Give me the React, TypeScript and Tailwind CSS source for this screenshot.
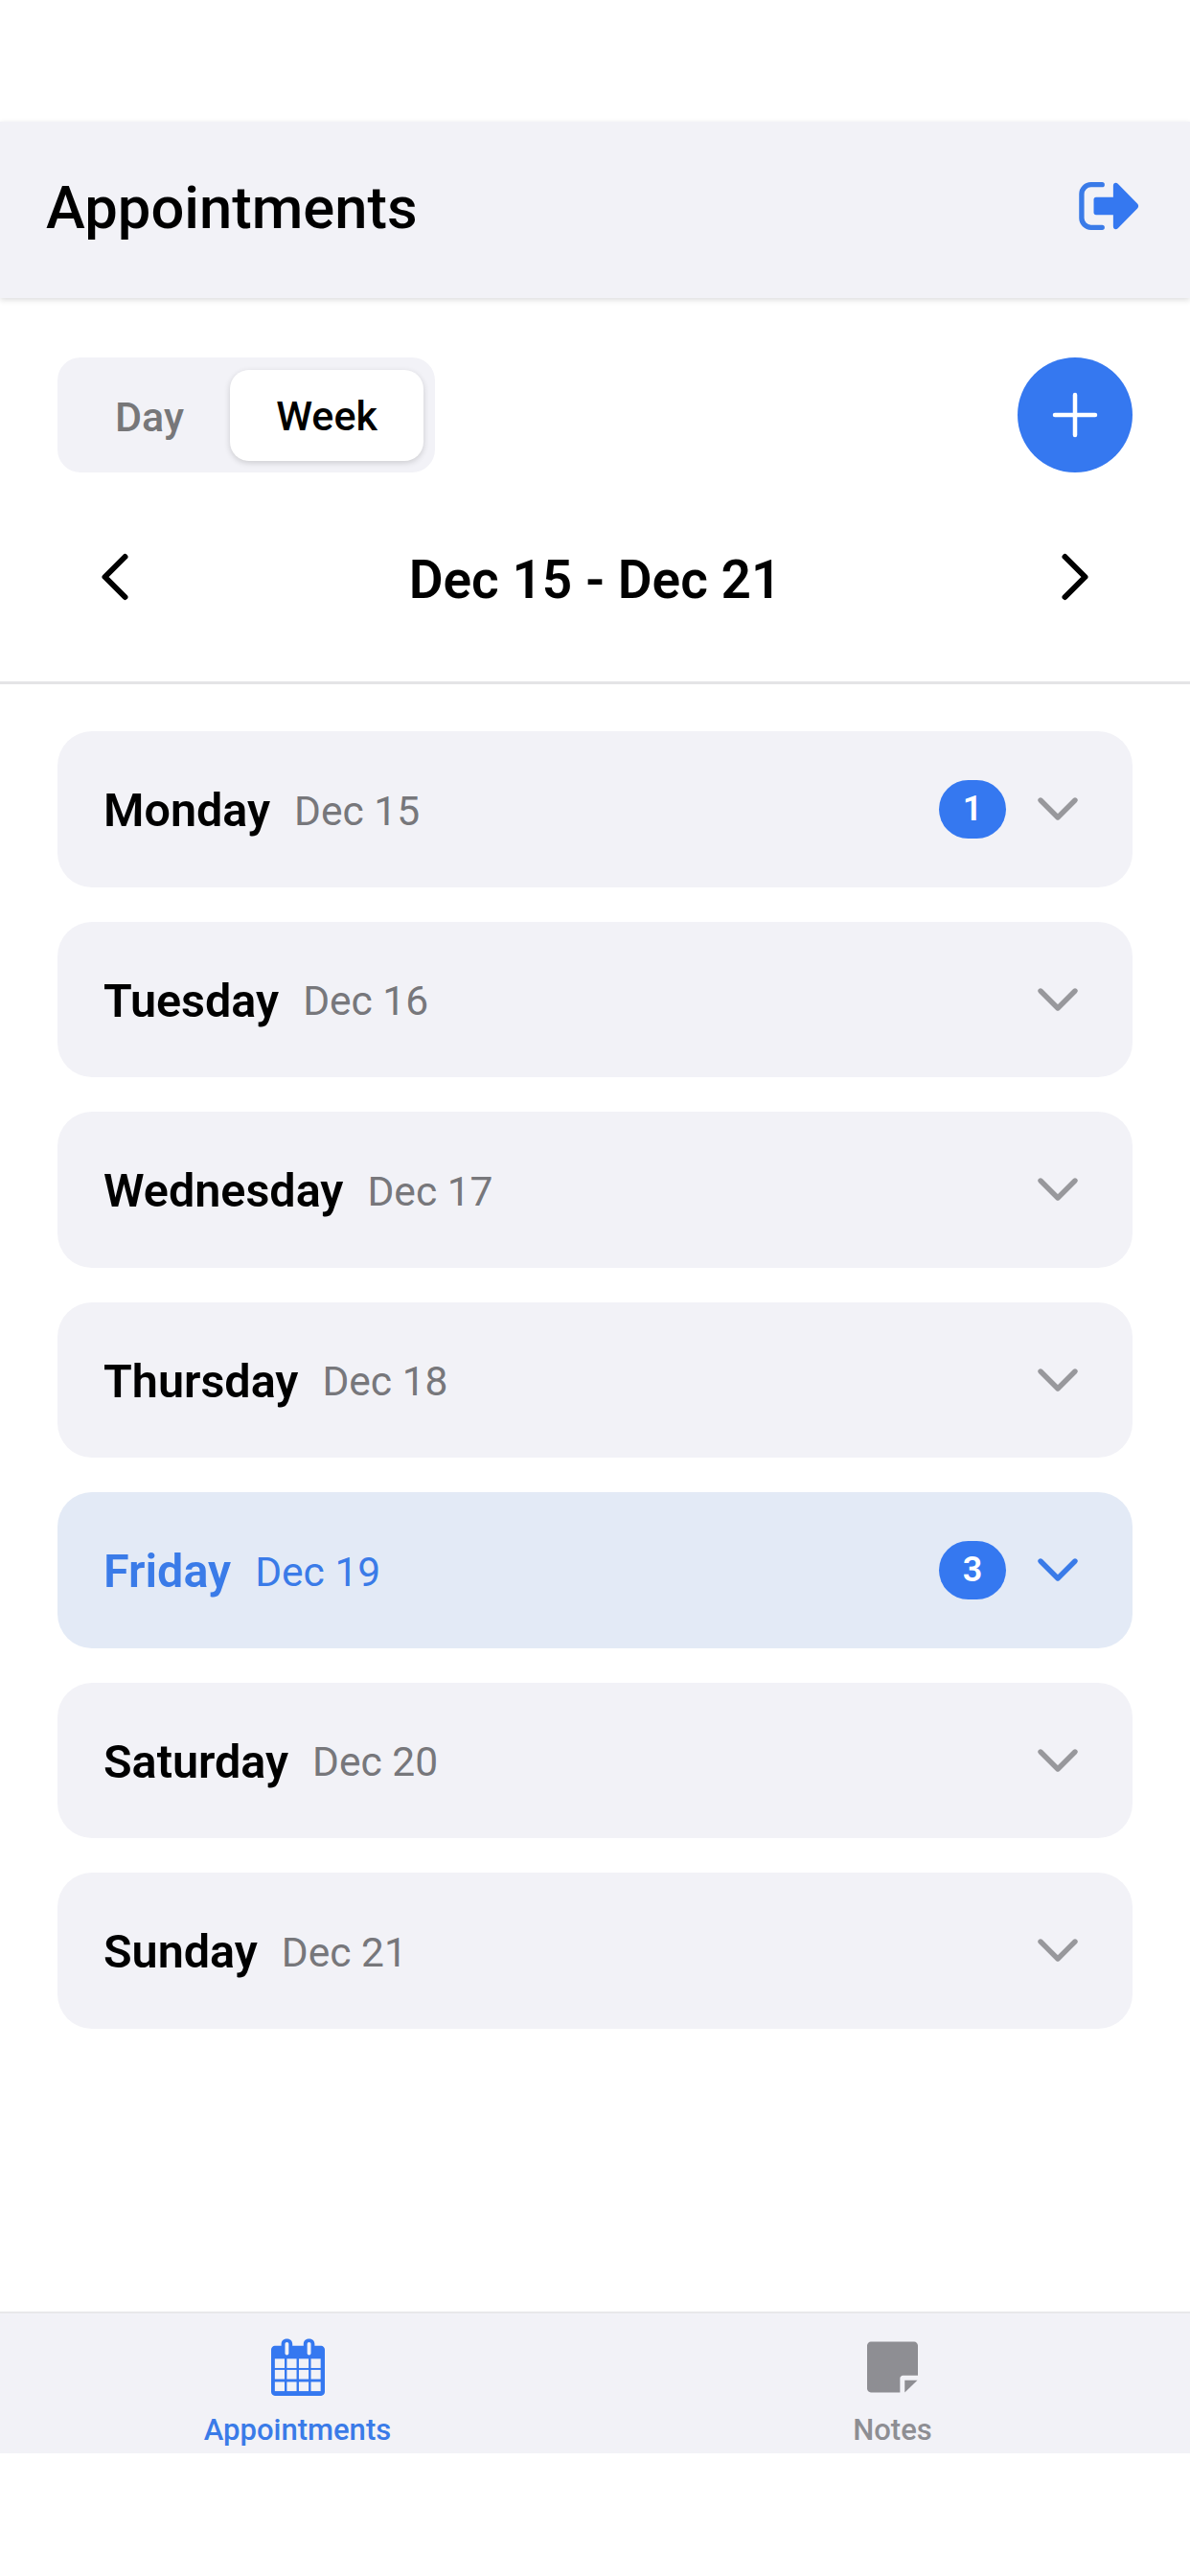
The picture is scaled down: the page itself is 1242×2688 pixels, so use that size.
import { ChevronDown, ChevronLeft, ChevronRight, Plus } from 'lucide-react';

const days = [
  { name: 'Monday', date: 'Dec 15', count: 1 },
  { name: 'Tuesday', date: 'Dec 16' },
  { name: 'Wednesday', date: 'Dec 17' },
  { name: 'Thursday', date: 'Dec 18' },
  { name: 'Friday', date: 'Dec 19', count: 3, active: true },
  { name: 'Saturday', date: 'Dec 20' },
  { name: 'Sunday', date: 'Dec 21' },
];

const LogoutIcon = () => (
  <svg width="64" height="52" viewBox="0 0 66 52" fill="none" className="mb-[9px]">
    <path
      d="M25 3H13C7.500 3 3 7.500 3 13V39C3 44.500 7.500 49 13 49H25"
      stroke="#3a7be8"
      strokeWidth="5.500"
      strokeLinecap="round"
    />
    <path
      d="M16 19C16 17.500 17 16.500 18.500 16.500H37V4C37 1 40 0 42 2L63 23.500C64.500 25 64.500 27 63 28.500L42 50C40 52 37 51 37 48V35.500H18.500C17 35.500 16 34.500 16 33Z"
      fill="#3578f0"
    />
  </svg>
);

const CalendarIcon = () => (
  <svg width="56" height="62" viewBox="0 0 58 62">
    <path
      d="M4 8H11V6C11 -1.500 23 -1.500 23 6V8H35V6C35 -1.500 47 -1.500 47 6V8H54C56 8 58 10 58 12V58C58 60 56 62 54 62H4C2 62 0 60 0 58V12C0 10 2 8 4 8Z"
      fill="#3578f0"
    />
    <rect x="15" y="4" width="4" height="14" rx="2" fill="#f2f2f7" />
    <rect x="39" y="4" width="4" height="14" rx="2" fill="#f2f2f7" />
    {[22, 34, 47].map((y) =>
      [4, 17, 30, 43].map((x) => (
        <rect key={`${x}-${y}`} x={x} y={y} width="10.500" height="10" fill="#f2f2f7" />
      )),
    )}
  </svg>
);

const NoteIcon = () => (
  <svg width="53" height="54" viewBox="0 0 54 54">
    <path
      d="M4 0H50C52 0 54 2 54 4V36H38C36.500 36 35 37.500 35 39V54H4C2 54 0 52 0 50V4C0 2 2 0 4 0Z"
      fill="#8e8e93"
    />
    <path d="M40 41H53.500L40 54Z" fill="#8e8e93" />
  </svg>
);

export default function App() {
  return (
    <div className="flex h-[2688px] w-[1242px] flex-col overflow-hidden bg-white font-['Roboto',sans-serif]">
      <div className="h-[127px] flex-none" />

      <header className="z-10 flex h-[184px] flex-none items-center justify-between bg-[#f2f2f7] pl-[48px] pr-[52px] shadow-[0_2px_6px_rgba(0,0,0,0.14)]">
        <h1 className="mb-[3px] text-[61.500px] font-medium leading-none text-black">Appointments</h1>
        <LogoutIcon />
      </header>

      <section className="flex-none border-b-[3px] border-[#e4e4e6] px-[60px] pt-[62px]">
        <div className="flex items-center justify-between">
          <div className="flex h-[120px] w-[394px] items-center justify-between rounded-[24px] bg-[#f2f2f7] px-[12px]">
            <span className="flex-1 pt-[4px] text-center text-[43px] font-medium text-[#777779]">Day</span>
            <span className="flex h-[95px] w-[202px] items-center justify-center rounded-[20px] bg-white pt-[2px] text-[43px] font-medium text-black shadow-[0_2px_6px_rgba(0,0,0,0.16)]">
              Week
            </span>
          </div>
          <div className="flex size-[120px] items-center justify-center rounded-full bg-[#3578f0]">
            <Plus size={72} strokeWidth={1.5} color="#ffffff" />
          </div>
        </div>
        <div className="flex h-[218px] items-center justify-between">
          <ChevronLeft size={84} strokeWidth={1.7} color="#000000" className="ml-[18px]" />
          <span className="pt-[6px] text-[55px] font-semibold leading-[64px] text-black">Dec 15 - Dec 21</span>
          <ChevronRight size={84} strokeWidth={1.7} color="#000000" className="mr-[18px]" />
        </div>
      </section>

      <main className="flex flex-1 flex-col gap-[36px] px-[60px] pt-[49px]">
        {days.map((day) => (
          <div
            key={day.name}
            className={`flex h-[162.500px] items-center rounded-[36px] pl-[48px] pr-[42px] ${day.active ? 'bg-[#e3eaf6]' : 'bg-[#f2f2f7]'}`}
          >
            <span className={`pt-[5px] text-[48.500px] font-semibold ${day.active ? 'text-[#3a7be8]' : 'text-black'}`}>{day.name}</span>
            <span className={`ml-[25px] pt-[5px] text-[42.500px] ${day.active ? 'text-[#3a7be8]' : 'text-[#77777b]'}`}>{day.date}</span>
            <div className="ml-auto flex items-center gap-[18px]">
              {day.count && (
                <span className="flex h-[61px] w-[70px] items-center justify-center rounded-full bg-[#3578f0] text-[36px] font-semibold text-white">
                  {day.count}
                </span>
              )}
              <ChevronDown size={72} strokeWidth={1.8} color={day.active ? '#3a7be8' : '#98989c'} />
            </div>
          </div>
        ))}
      </main>

      <nav className="flex h-[148px] flex-none border-t-[2px] border-[#e8e8ea] bg-[#f2f2f7]">
        <div className="flex w-[621px] flex-col items-center pt-[25px]">
          <CalendarIcon />
          <span className="mt-[17px] text-[31px] font-medium leading-[36px] text-[#3a7be8]">Appointments</span>
        </div>
        <div className="flex w-[621px] flex-col items-center pt-[29px]">
          <NoteIcon />
          <span className="mt-[21px] text-[31px] font-medium leading-[36px] text-[#8e8e93]">Notes</span>
        </div>
      </nav>

      <div className="h-[128px] flex-none" />
    </div>
  );
}
